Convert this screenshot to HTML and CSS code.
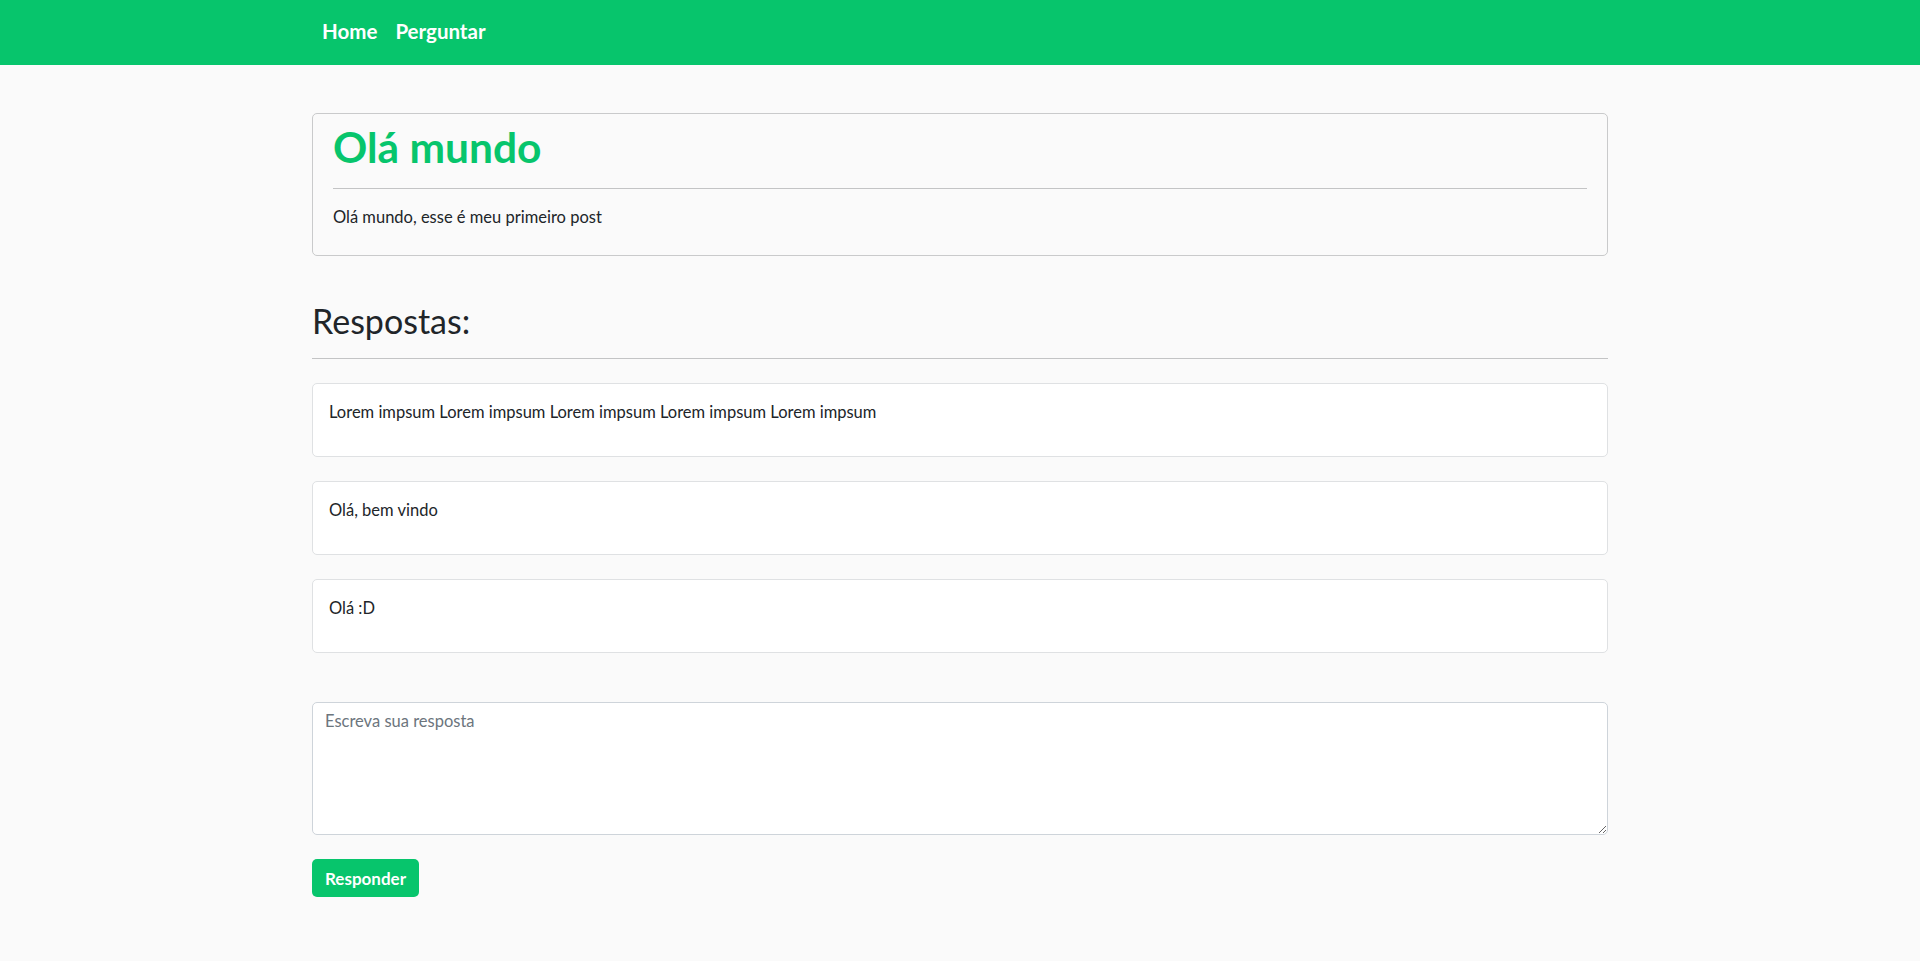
FILE: index.html
```html
<!DOCTYPE html>
<html lang="pt-BR">
<head>
<meta charset="utf-8">
<title>Pergunta</title>
<link rel="stylesheet" href="styles.css">
</head>
<body>
<nav class="topbar">
  <div class="container nav-inner">
    <a class="nav-link" href="#">Home</a>
    <a class="nav-link" href="#">Perguntar</a>
  </div>
</nav>
<main class="container page">
  <section class="post">
    <h1 class="post-title">Olá mundo</h1>
    <hr class="rule">
    <p class="post-text">Olá mundo, esse é meu primeiro post</p>
  </section>

  <h2 class="answers-title">Respostas:</h2>
  <hr class="rule rule-full">

  <div class="answers">
    <div class="answer"><p>Lorem impsum Lorem impsum Lorem impsum Lorem impsum Lorem impsum</p></div>
    <div class="answer"><p>Olá, bem vindo</p></div>
    <div class="answer"><p>Olá :D</p></div>
  </div>

  <form class="reply-form">
    <textarea class="reply-input" rows="5" placeholder="Escreva sua resposta"></textarea>
    <button class="btn" type="button">Responder</button>
  </form>
</main>
</body>
</html>
```
FILE: styles.css
```css
* { box-sizing: border-box; }
html, body { margin: 0; }
body {
  background: #fafafa;
  color: #212529;
  font-family: "Lato", "Noto Sans", sans-serif;
  font-size: 16.5px;
  line-height: 1.5;
}
.container {
  width: 1296px;
  margin: 0 auto;
}
.topbar {
  background: #07c56c;
  height: 65px;
}
.nav-inner {
  display: flex;
  align-items: center;
  height: 65px;
  padding-left: 10px;
  padding-bottom: 2px;
  gap: 18px;
}
.nav-link {
  color: #fff;
  text-decoration: none;
  font-weight: 700;
  font-size: 20.5px;
}
.page {
  padding-top: 48px;
  padding-bottom: 60px;
}
.post {
  border: 1px solid #c9cacb;
  border-radius: 5px;
  padding: 9px 20px 26px;
}
.post-title {
  margin: 0;
  color: #07c56c;
  font-size: 42.5px;
  line-height: 48px;
  font-weight: 700;
}
.rule {
  border: 0;
  border-top: 1px solid #c3c4c5;
  margin: 17px 0 16px;
}
.post-text {
  margin: 0;
  font-size: 16.5px;
  line-height: 24px;
}
.answers-title {
  margin: 46px 0 0;
  font-size: 34px;
  line-height: 38px;
  font-weight: 400;
}
.rule-full {
  margin: 18px 0 24px;
}
.answers {
  display: flex;
  flex-direction: column;
  gap: 24px;
}
.answer {
  background: #fff;
  border: 1px solid #dfe1e3;
  border-radius: 5px;
  padding: 16px 16px 32px;
}
.answer p {
  margin: 0;
  font-size: 16.5px;
  line-height: 24px;
}
.reply-form {
  margin-top: 49px;
  display: flex;
  flex-direction: column;
  align-items: flex-start;
  gap: 24px;
}
.reply-input {
  width: 100%;
  height: 133px;
  border: 1px solid #ced4da;
  border-radius: 5px;
  padding: 6px 12px;
  font-family: inherit;
  font-size: 16.5px;
  line-height: 24px;
  color: #212529;
  background: #fff;
  resize: vertical;
}
.reply-input::placeholder { color: #6c757d; }
.btn {
  background: #07c56c;
  color: #fff;
  border: 0;
  border-radius: 5px;
  height: 38px;
  padding: 0 13px;
  font-family: inherit;
  font-weight: 700;
  font-size: 17px;
  cursor: pointer;
}
```
